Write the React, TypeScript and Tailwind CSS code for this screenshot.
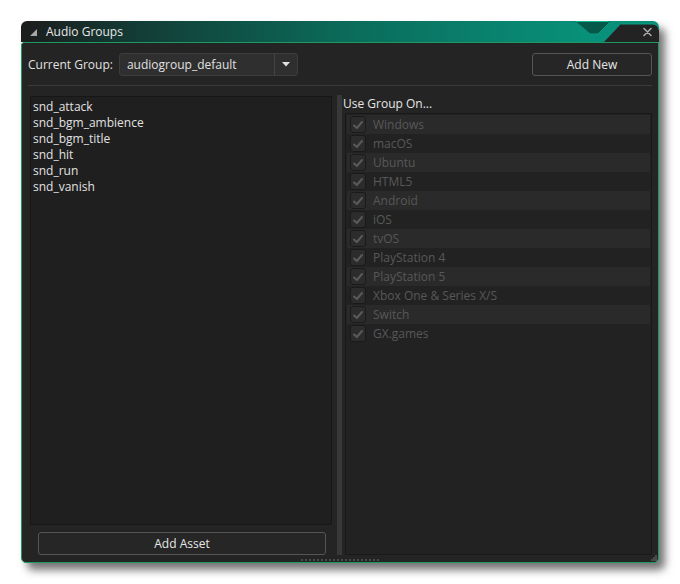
import React from 'react';

const ASSETS = ['snd_attack', 'snd_bgm_ambience', 'snd_bgm_title', 'snd_hit', 'snd_run', 'snd_vanish'];

const PLATFORMS = [
  'Windows',
  'macOS',
  'Ubuntu',
  'HTML5',
  'Android',
  'iOS',
  'tvOS',
  'PlayStation 4',
  'PlayStation 5',
  'Xbox One & Series X/S',
  'Switch',
  'GX.games',
];

function CheckBox() {
  return (
    <div className="w-[16px] h-[17px] rounded-[3px] border border-[#1a1a1a] bg-[#2c2c2c] flex items-center justify-center shrink-0">
      <svg width="12" height="12" viewBox="0 0 12 12">
        <path d="M2 6.5 L4.8 9 L10 3" fill="none" stroke="#5a5a5a" strokeWidth="2" strokeLinecap="round" strokeLinejoin="round" />
      </svg>
    </div>
  );
}

function TitleBar() {
  return (
    <div className="relative h-[21px] rounded-t-[6px] bg-[linear-gradient(to_right,#1c1c1c_0%,#133c36_18%,#0b6a59_50%,#08907a_88%)] flex items-center pl-[9px]">
      <svg width="7" height="7" viewBox="0 0 7 7" className="mr-[9px] mt-[2px]">
        <path d="M7 0 L7 7 L0 7 Z" fill="#a8a8a8" />
      </svg>
      <span className="text-[12px] text-[#e6e6e6] leading-none">Audio Groups</span>
      {/* notch + close tab */}
      <svg className="absolute right-[-1px] top-0" width="86" height="21" viewBox="0 0 86 21">
        <path d="M0 0 L37 0 L24 13 L16 13 Z" fill="#05594a" />
        <path d="M2 0.5 L35 0.5" stroke="#10b58f" strokeWidth="1" />
        <path d="M1 0 L16 13 L24 13 L37 0" fill="none" stroke="#0c9a7c" strokeWidth="1" />
        <path d="M30 21 L47 3 L78 3 Q84 3 85 9 L85 21 Z" fill="#232323" />
        <path d="M47 3 L78 3 Q84 3 85 9" fill="none" stroke="#0f9e7c" strokeWidth="1" />
        <path d="M70 7.5 L77 14.5 M77 7.5 L70 14.5" stroke="#a8a8a8" strokeWidth="1.6" strokeLinecap="round" />
      </svg>
    </div>
  );
}

export default function App() {
  return (
    <div
      className="w-[680px] h-[584px] bg-white pt-[21px] pl-[21px]"
      style={{ fontFamily: '"Open Sans", "Noto Sans", sans-serif' }}
    >
      <div className="w-[638px] flex flex-col shadow-[6px_7px_9px_rgba(0,0,0,0.55)] rounded-[6px]">
        <TitleBar />

        <div className="relative h-[521px] border border-[#1c9a62] rounded-b-[5px] rounded-tl-[3px] bg-[#242424] flex flex-col pt-[10px] pb-[7px]">
          {/* top row */}
          <div className="flex items-center h-[23px] px-[6px]">
            <span className="text-[12px] text-[#e0e0e0] mr-[6px]">Current Group:</span>
            <div className="flex h-[23px] w-[179px] rounded-[3px] border border-[#3d3d3d] bg-[#2f2f2f]">
              <span className="flex-1 text-[12px] text-[#e0e0e0] pl-[7px] leading-[21px]">audiogroup_default</span>
              <div className="w-[23px] border-l border-[#444] flex items-center justify-center">
                <svg width="8" height="5" viewBox="0 0 8 5">
                  <path d="M0 0 L8 0 L4 4.5 Z" fill="#e0e0e0" />
                </svg>
              </div>
            </div>
            <div className="ml-auto h-[23px] w-[120px] rounded-[3px] border border-[#555] bg-[#262626] flex items-center justify-center text-[12px] text-[#e6e6e6]">
              Add New
            </div>
          </div>

          <div className="mx-[6px] mt-[9px] h-px bg-[#3a3a3a]" />

          {/* panels */}
          <div className="flex flex-1 mt-[10px] pr-[6px]">
            <div className="flex flex-col w-[302px] ml-[8px]">
              <div className="flex-1 bg-[#1f1f1f] border border-[#171717] pt-[2px] pl-[2px]">
                {ASSETS.map((a) => (
                  <div key={a} className="h-[16px] text-[12px] leading-[16px] text-[#e2e2e2]">
                    {a}
                  </div>
                ))}
              </div>
              <div className="mt-[7px] ml-[8px] mr-[6px] h-[23px] rounded-[3px] border border-[#555] bg-[#262626] flex items-center justify-center text-[12px] text-[#e6e6e6]">
                Add Asset
              </div>
            </div>

            <div className="w-[5px] bg-[#383838] ml-[5px] -mt-[1px]" />

            <div className="flex flex-col flex-1 ml-[1px]">
              <div className="h-[17px] text-[12px] leading-[15px] text-[#e6e6e6]">Use Group On...</div>
              <div className="flex-1 ml-[2px] bg-[#222222] border border-[#191919] p-px">
                {PLATFORMS.map((p, i) => (
                  <div
                    key={p}
                    className={`h-[19px] flex items-center pl-[3px] ${i % 2 === 0 ? 'bg-[#2a2a2a]' : 'bg-[#222222]'}`}
                  >
                    <CheckBox />
                    <span className="ml-[7px] text-[12px] text-[#585858]">{p}</span>
                  </div>
                ))}
              </div>
            </div>
          </div>

          {/* resize grips */}
          <div className="absolute bottom-[1px] left-[279px] w-[80px] h-[2px] bg-[repeating-linear-gradient(to_right,#4a4a4a_0px,#4a4a4a_2px,transparent_2px,transparent_4px)]" />
          <svg className="absolute bottom-[1px] right-[1px]" width="7" height="7" viewBox="0 0 7 7">
            <rect x="5" y="1" width="2" height="2" fill="#4a4a4a" />
            <rect x="3" y="3" width="2" height="2" fill="#4a4a4a" />
            <rect x="5" y="3" width="2" height="2" fill="#4a4a4a" />
            <rect x="1" y="5" width="2" height="2" fill="#4a4a4a" />
            <rect x="3" y="5" width="2" height="2" fill="#4a4a4a" />
            <rect x="5" y="5" width="2" height="2" fill="#4a4a4a" />
          </svg>
        </div>
      </div>
    </div>
  );
}
